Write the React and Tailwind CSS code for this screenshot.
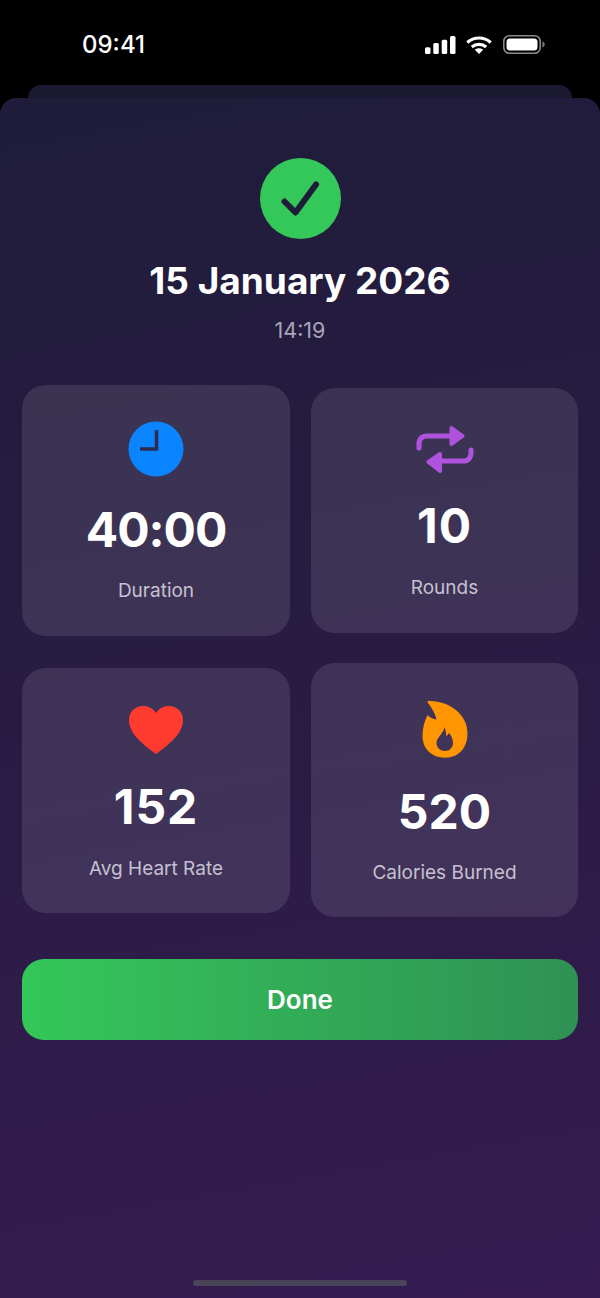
import React from 'react';

const font = { fontFamily: 'Inter, sans-serif' };

function StatusIcons() {
  return (
    <div className="flex items-center">
      <svg width="31" height="18" viewBox="0 0 31 18" fill="#fff">
        <rect x="0" y="11.300" width="5.500" height="6.700" rx="1.500" />
        <rect x="8.300" y="7" width="5.500" height="11" rx="1.500" />
        <rect x="16.700" y="3.700" width="5.500" height="14.300" rx="1.500" />
        <rect x="25" y="0" width="5.500" height="18" rx="1.500" />
      </svg>
      <svg className="ml-[10px]" width="26" height="18" viewBox="0 0 26 18" fill="none" stroke="#fff" strokeWidth="3.200">
        <path d="M1.300 6.500C8 .5 18 .5 24.700 6.500" />
        <path d="M5.800 11c4.200-3.400 10.200-3.400 14.400 0" />
        <path d="M13 18l-4.200-4.200c2.400-2 6-2 8.400 0z" fill="#fff" stroke="none" />
      </svg>
      <svg className="ml-[11px]" width="42" height="19" viewBox="0 0 42 19" fill="none">
        <rect x="0.800" y="0.800" width="36.400" height="17.400" rx="5.500" stroke="#8a8a8a" strokeWidth="1.600" />
        <rect x="3.500" y="3.500" width="31" height="12" rx="3.500" fill="#fff" />
        <path d="M39.300 6.500c1.500.4 2.400 1.600 2.400 3s-.9 2.600-2.400 3z" fill="#777" />
      </svg>
    </div>
  );
}

function RepeatIcon() {
  return (
    <svg width="60" height="50" viewBox="0 0 60 50" fill="none" stroke="#af52de" strokeWidth="5" strokeLinecap="round" strokeLinejoin="round">
      <path d="M4 24v-4c0-5 3-8 8-8h26" />
      <path d="M36.500 4L47.500 12L36.500 20z" fill="#af52de" strokeWidth="4" />
      <path d="M56 26v3c0 5-3 8-8 8H24" />
      <path d="M25 30L13.500 38L25 47z" fill="#af52de" strokeWidth="4" />
    </svg>
  );
}

function ClockIcon() {
  return (
    <svg width="56" height="56" viewBox="0 0 56 56">
      <circle cx="28" cy="28" r="27.500" fill="#0a84ff" />
      <path d="M28.500 9v19H12" fill="none" stroke="#2e2b52" strokeWidth="3.500" />
    </svg>
  );
}

function HeartIcon() {
  return (
    <svg width="56" height="50" viewBox="0 0 56 50">
      <path d="M28 49C13 38 1 28 1 15 1 6.500 7.500 1 15 1c5.500 0 10 2.500 13 7 3-4.500 7.500-7 13-7 7.500 0 14 5.500 14 14 0 13-12 23-27 34z" fill="#ff3b30" />
    </svg>
  );
}

function FlameIcon() {
  return (
    <svg width="46" height="58" viewBox="0 0 46 58">
      <path
        fillRule="evenodd"
        fill="#ff9500"
        d="M8 1C6 .5 5 1.500 6 3c3.500 4.500 7 10 8.500 16.500-3.500-.5-6.500-2-9-4.500C2.500 21 .5 28 .5 36c0 13 9.500 21.700 22.500 21.700S45.500 49 45.500 33C45.500 15 28 1 8 1zM22.500 27c1 3 1.500 6 2 9.500l2.500-3.500c2.500 3 4 6.500 4 10 0 4.500-3.500 8-8 8s-8.500-3.500-8.500-8c0-6 7-9 8-16z"
      />
    </svg>
  );
}

function Stat({ icon, value, label, card, iconBox, valueClass, labelClass }) {
  return (
    <div className={`flex flex-col items-center rounded-[24px] bg-white/10 ${card}`}>
      <div className={`flex items-center justify-center ${iconBox}`}>{icon}</div>
      <div className={`text-[48px] font-bold leading-[48px] text-white ${valueClass}`}>{value}</div>
      <div className={`text-[19px] leading-[19px] text-[#c5c1d2] ${labelClass}`}>{label}</div>
    </div>
  );
}

export default function App() {
  return (
    <div style={font} className="flex h-[1298px] w-[600px] flex-col overflow-hidden bg-black">
      {/* status bar */}
      <div className="flex h-[85px] shrink-0 items-start justify-between pl-[82px] pr-[55px] pt-[31px]">
        <span className="text-[24px] font-medium leading-[28px] text-white">09:41</span>
        <div className="pt-[4px]"><StatusIcons /></div>
      </div>
      <div className="mx-[28px] h-[13px] shrink-0 rounded-t-[14px] bg-[#1b1932]" />

      {/* sheet */}
      <div className="relative flex flex-1 flex-col rounded-t-[16px] bg-[linear-gradient(170deg,#1f1c3a_0%,#2a1c45_55%,#351b50_100%)] px-[22px] pt-[60px]">
        <div className="flex flex-col items-center">
          <div className="flex h-[81px] w-[81px] items-center justify-center rounded-full bg-[#34c759]">
            <svg width="41" height="41" viewBox="0 0 41 41" fill="none" stroke="#1f1c3a" strokeWidth="6" strokeLinecap="round" strokeLinejoin="round">
              <path d="M4.500 23.500L15.500 34.500L36 6.500" />
            </svg>
          </div>
          <h1 className="mt-[20px] text-[37px] font-bold leading-[44px] text-white">15 January 2026</h1>
          <p className="mt-[15px] text-[21.500px] leading-[24px] text-[#a9a5b8]">14:19</p>
        </div>

        <div className="mt-[43px] grid grid-cols-[268px_267px] items-center gap-x-[21px] gap-y-[27px]">
          <Stat
            icon={<ClockIcon />}
            value="40:00"
            label="Duration"
            card="h-[251px] pt-[36px]"
            iconBox="h-[56px]"
            valueClass="mt-[29px] tracking-[-1px]"
            labelClass="mt-[27px]"
          />
          <Stat
            icon={<RepeatIcon />}
            value="10"
            label="Rounds"
            card="h-[245px] pt-[36px]"
            iconBox="h-[50px]"
            valueClass="mt-[28px] tracking-[1px]"
            labelClass="mt-[28px]"
          />
          <Stat
            icon={<HeartIcon />}
            value="152"
            label="Avg Heart Rate"
            card="h-[245px] pt-[37px]"
            iconBox="h-[50px]"
            valueClass="mt-[28px] tracking-[1px]"
            labelClass="mt-[28px]"
          />
          <Stat
            icon={<FlameIcon />}
            value="520"
            label="Calories Burned"
            card="h-[254px] pt-[37px]"
            iconBox="h-[58px]"
            valueClass="mt-[30px]"
            labelClass="mt-[27px]"
          />
        </div>

        <button className="mt-[42px] flex h-[81px] w-full items-center justify-center rounded-[22px] bg-gradient-to-r from-[#34c759] to-[#2f9154] text-[26px] font-semibold text-white">
          Done
        </button>

        {/* home indicator */}
        <div className="absolute bottom-[12px] left-[193px] h-[6px] w-[214px] rounded-full bg-[#4a4458]" />
      </div>
    </div>
  );
}
